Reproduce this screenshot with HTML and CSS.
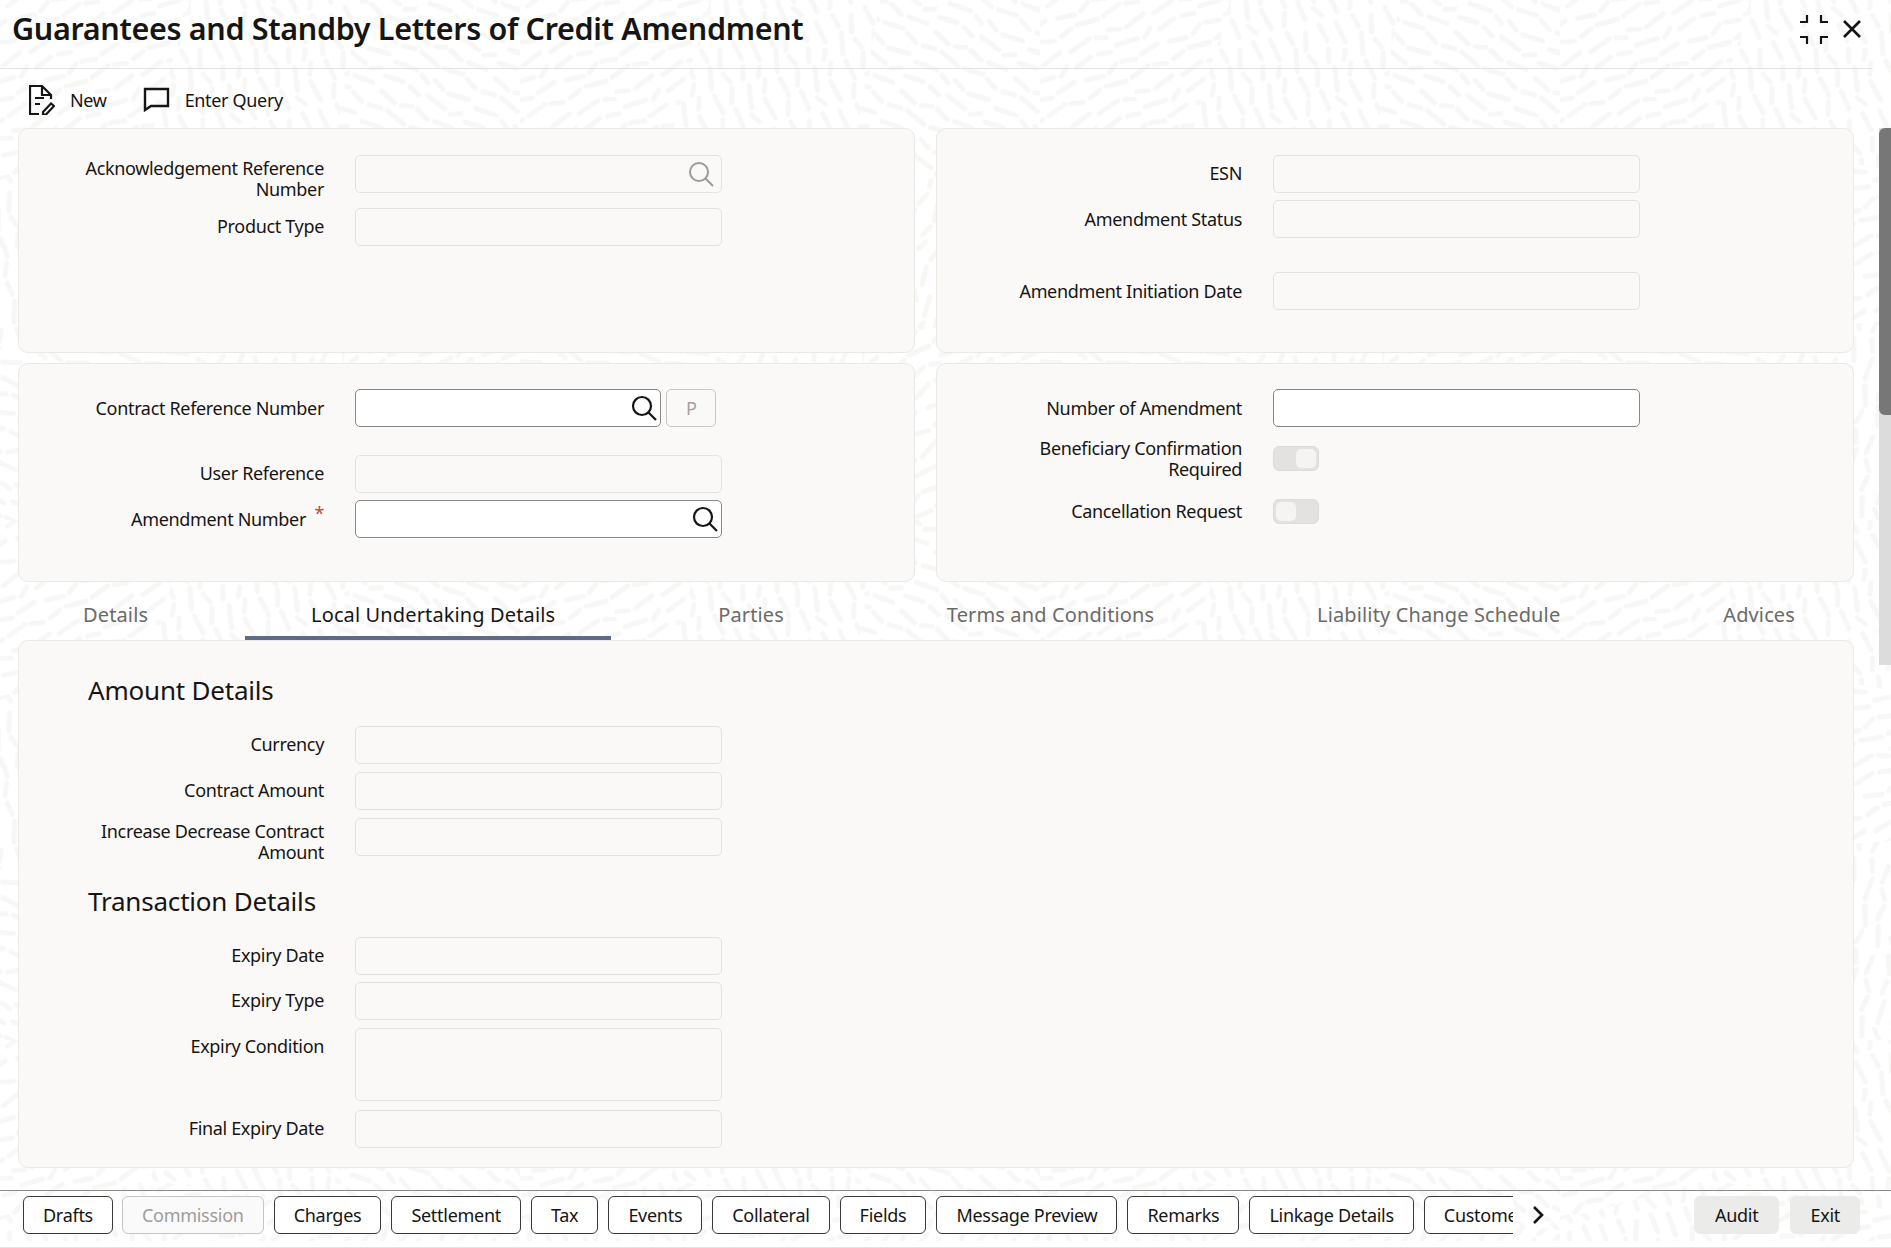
FILE: index.html
```html
<!DOCTYPE html>
<html lang="en">
<head>
  <meta charset="UTF-8">
  <title>Guarantees and Standby Letters of Credit Amendment</title>
  <link rel="stylesheet" href="styles.css">
</head>
<body>
  <!-- Background texture -->
  <svg class="texture" width="1891" height="1241" aria-hidden="true">
    <defs>
      <pattern id="rice" width="92" height="68" patternUnits="userSpaceOnUse">
        <g stroke="#f7f7f6" stroke-width="5" stroke-linecap="round">
          <line x1="4" y1="9" x2="22" y2="5"/>
          <line x1="30" y1="6" x2="42" y2="9"/>
          <line x1="8" y1="24" x2="25" y2="28"/>
          <line x1="32" y1="27" x2="42" y2="22"/>
          <line x1="50" y1="5" x2="72" y2="8"/>
          <line x1="79" y1="10" x2="88" y2="4"/>
          <line x1="48" y1="22" x2="62" y2="26"/>
          <line x1="69" y1="24" x2="88" y2="21"/>
          <line x1="4" y1="42" x2="16" y2="39"/>
          <line x1="23" y1="38" x2="44" y2="42"/>
          <line x1="6" y1="60" x2="28" y2="56"/>
          <line x1="35" y1="58" x2="44" y2="62"/>
          <line x1="51" y1="41" x2="70" y2="37"/>
          <line x1="76" y1="39" x2="88" y2="43"/>
          <line x1="49" y1="56" x2="60" y2="60"/>
          <line x1="67" y1="61" x2="88" y2="56"/>
        </g>
      </pattern>
      <pattern id="r1" href="#rice" patternTransform="rotate(-25)"/>
      <pattern id="r2" href="#rice" patternTransform="rotate(75)"/>
      <pattern id="r3" href="#rice" patternTransform="rotate(30)"/>
      <pattern id="r4" href="#rice" patternTransform="rotate(80)"/>
      <pattern id="r5" href="#rice" patternTransform="rotate(-20)"/>
      <pattern id="r6" href="#rice" patternTransform="rotate(-65)"/>
      <pattern id="r7" href="#rice" patternTransform="rotate(15)"/>
      <pattern id="r8" href="#rice" patternTransform="rotate(100)"/>
      <pattern id="r9" href="#rice" patternTransform="rotate(-35)"/>
      <pattern id="field" width="520" height="520" patternUnits="userSpaceOnUse">
        <polygon points="0,0 190,0 150,140 0,180" fill="url(#r1)"/>
        <polygon points="190,0 360,0 330,170 150,140" fill="url(#r2)"/>
        <polygon points="360,0 520,0 520,190 330,170" fill="url(#r3)"/>
        <polygon points="0,180 150,140 210,330 0,350" fill="url(#r4)"/>
        <polygon points="150,140 330,170 340,320 210,330" fill="url(#r5)"/>
        <polygon points="330,170 520,190 520,340 340,320" fill="url(#r6)"/>
        <polygon points="0,350 210,330 190,520 0,520" fill="url(#r7)"/>
        <polygon points="210,330 340,320 360,520 190,520" fill="url(#r8)"/>
        <polygon points="340,320 520,340 520,520 360,520" fill="url(#r9)"/>
      </pattern>
    </defs>
    <rect width="1891" height="1241" fill="url(#field)"/>
  </svg>

  <div class="page">
    <!-- Title bar -->
    <header class="header">
      <h1 class="title">Guarantees and Standby Letters of Credit Amendment</h1>
      <div class="window-icons">
        <svg width="30" height="30" viewBox="0 0 30 30" fill="none" stroke="#161513" stroke-width="2.200">
          <path d="M1 8H8V1M22 1V8H29M1 23H8V30M29 23H22V30"/>
        </svg>
        <svg width="22" height="22" viewBox="0 0 22 22" fill="none" stroke="#161513" stroke-width="2.600">
          <path d="M3 3L19 19M19 3L3 19"/>
        </svg>
      </div>
    </header>

    <!-- Toolbar -->
    <div class="toolbar">
      <a class="tool tool-new">
        <svg width="26" height="30" viewBox="0 0 26 30" fill="none" stroke="#161513" stroke-width="2.200">
          <path d="M10 29H1V1H13L22 10V14M13 1V10H22"/>
          <path d="M6 13H15M6 19H11"/>
          <path d="M14 27L22 18.500L25 21L17 29.500L14 29.500Z"/>
        </svg>
        New
      </a>
      <a class="tool">
        <svg width="27" height="25" viewBox="0 0 27 25" fill="none" stroke="#161513" stroke-width="2.400">
          <path d="M2 2H25V19H8L2 23Z"/>
        </svg>
        Enter Query
      </a>
    </div>

    <div class="main">
      <div class="content">
        <div class="top-grid">
          <section class="panel panel-first">
            <div class="field">
              <label class="two-line">Acknowledgement Reference Number</label>
              <div class="input disabled">
                <svg class="search search-off" width="26" height="26" viewBox="0 0 26 26" fill="none" stroke="#9b9a98" stroke-width="2">
                  <circle cx="11" cy="11" r="9"/><path d="M17.500 17.500L25 25"/>
                </svg>
              </div>
            </div>
            <div class="field gap-md">
              <label>Product Type</label>
              <div class="input disabled"></div>
            </div>
          </section>

          <section class="panel panel-first">
            <div class="field">
              <label>ESN</label>
              <div class="input disabled"></div>
            </div>
            <div class="field gap-xs low-label">
              <label>Amendment Status</label>
              <div class="input disabled"></div>
            </div>
            <div class="field gap-xl low-label">
              <label>Amendment Initiation Date</label>
              <div class="input disabled"></div>
            </div>
          </section>

          <section class="panel panel-second">
            <div class="field low-label">
              <label>Contract Reference Number</label>
              <div class="input input-short">
                <svg class="search" width="26" height="26" viewBox="0 0 26 26" fill="none" stroke="#161513" stroke-width="2.200">
                  <circle cx="11" cy="11" r="9"/><path d="M17.500 17.500L25 25"/>
                </svg>
              </div>
              <button class="p-btn">P</button>
            </div>
            <div class="field gap-lg">
              <label>User Reference</label>
              <div class="input disabled"></div>
            </div>
            <div class="field gap-xs low-label">
              <label class="required">Amendment Number</label>
              <div class="input">
                <svg class="search" width="26" height="26" viewBox="0 0 26 26" fill="none" stroke="#161513" stroke-width="2.200">
                  <circle cx="11" cy="11" r="9"/><path d="M17.500 17.500L25 25"/>
                </svg>
              </div>
            </div>
          </section>

          <section class="panel panel-second">
            <div class="field low-label">
              <label>Number of Amendment</label>
              <div class="input"></div>
            </div>
            <div class="field field-toggle field-tall">
              <label class="two-line">Beneficiary Confirmation Required</label>
              <span class="toggle on"></span>
            </div>
            <div class="field field-toggle gap-toggle">
              <label>Cancellation Request</label>
              <span class="toggle"></span>
            </div>
          </section>
        </div>

        <!-- Tabs -->
        <nav class="tabs">
          <a>Details</a>
          <a class="active">Local Undertaking Details</a>
          <a>Parties</a>
          <a>Terms and Conditions</a>
          <a>Liability Change Schedule</a>
          <a>Advices</a>
        </nav>

        <section class="panel panel-tab">
          <h2>Amount Details</h2>
          <div class="field">
            <label>Currency</label>
            <div class="input disabled"></div>
          </div>
          <div class="field">
            <label>Contract Amount</label>
            <div class="input disabled"></div>
          </div>
          <div class="field">
            <label class="two-line">Increase Decrease Contract Amount</label>
            <div class="input disabled"></div>
          </div>
          <h2 class="h2-second">Transaction Details</h2>
          <div class="field">
            <label>Expiry Date</label>
            <div class="input disabled"></div>
          </div>
          <div class="field gap-xs">
            <label>Expiry Type</label>
            <div class="input disabled"></div>
          </div>
          <div class="field field-area">
            <label>Expiry Condition</label>
            <div class="input disabled textarea"></div>
          </div>
          <div class="field">
            <label>Final Expiry Date</label>
            <div class="input disabled"></div>
          </div>
        </section>
      </div>

      <div class="scrollbar"><div class="thumb"></div></div>
    </div>

    <!-- Footer buttons -->
    <footer class="footer">
      <div class="actions">
        <button>Drafts</button>
        <button class="off">Commission</button>
        <button>Charges</button>
        <button>Settlement</button>
        <button>Tax</button>
        <button>Events</button>
        <button>Collateral</button>
        <button>Fields</button>
        <button>Message Preview</button>
        <button>Remarks</button>
        <button>Linkage Details</button>
        <button>Customer</button>
      </div>
      <svg class="chevron" width="14" height="20" viewBox="0 0 14 20" fill="none" stroke="#161513" stroke-width="2.600">
        <path d="M3 2L11 10L3 18"/>
      </svg>
      <div class="exit-group">
        <button class="grey audit">Audit</button>
        <button class="grey">Exit</button>
      </div>
    </footer>
  </div>
</body>
</html>
```

FILE: styles.css
```css
body {
  margin: 0;
  width: 1891px;
  height: 1248px;
  overflow: hidden;
  position: relative;
  background-color: #ffffff;
  color: #161513;
  font-family: "Noto Sans", Arial, sans-serif;
  font-size: 18px;
  letter-spacing: -0.33px;
}

.texture {
  position: absolute;
  top: 0;
  left: 0;
}

.page {
  position: relative;
  display: flex;
  flex-direction: column;
  height: 1248px;
}

/* Title bar */
.header {
  display: flex;
  justify-content: space-between;
  align-items: center;
  height: 69px;
  margin-right: 19px;
  padding-left: 12px;
  border-bottom: 1px solid #e4e3e1;
  box-sizing: border-box;
}

.title {
  margin: 0 0 12px;
  font-size: 30.500px;
  font-weight: 600;
  letter-spacing: -0.33px;
  line-height: 40px;
}

.window-icons {
  display: flex;
  align-items: center;
  gap: 12px;
  margin-bottom: 10px;
  padding-right: 9px;
}

/* Toolbar */
.toolbar {
  display: flex;
  align-items: center;
  gap: 36px;
  height: 59px;
  padding: 2px 0 0 29px;
  box-sizing: border-box;
}

.tool {
  display: flex;
  align-items: center;
  gap: 15px;
}

/* Main */
.main {
  display: flex;
  justify-content: space-between;
  height: 1062px;
  overflow: hidden;
}

.content {
  width: 1836px;
  margin-left: 18px;
}

.top-grid {
  display: grid;
  grid-template-columns: 897px 918px;
  column-gap: 21px;
  row-gap: 10px;
}

.panel {
  background-color: #fbf9f8;
  border: 1px solid #ebe9e6;
  border-radius: 10px;
  box-sizing: border-box;
}

.panel-first {
  height: 225px;
  padding-top: 26px;
}

.panel-second {
  height: 219px;
  padding-top: 25px;
}

.panel-tab {
  width: 1836px;
  height: 528px;
  padding-top: 31px;
}

h2 {
  margin: 0 0 18px 69px;
  font-size: 26px;
  font-weight: 400;
  letter-spacing: -0.2px;
  line-height: 36px;
}

.h2-second {
  margin-top: 27px;
}

/* Form rows */
.field {
  display: flex;
  gap: 31px;
  height: 38px;
  margin-top: 8px;
  padding-left: 55px;
}

.field:first-child {
  margin-top: 0;
}

.gap-xs {
  margin-top: 7px;
}

.gap-md {
  margin-top: 15px;
}

.gap-lg {
  margin-top: 28px;
}

.gap-xl {
  margin-top: 34px;
}

.gap-toggle {
  margin-top: 13px;
}

.field-tall {
  height: 42px;
  margin-top: 10px;
}

.field-area {
  height: 74px;
}

.field label {
  width: 250px;
  padding-top: 8px;
  line-height: 21px;
  text-align: right;
}

.field label.two-line {
  padding-top: 3px;
}

.low-label label {
  padding-top: 9px;
}

.field.low-label label {
  padding-top: 9px;
}

.field-toggle label {
  padding-top: 0;
}

.field-toggle {
  align-items: center;
}

.field.field-toggle label {
  padding-top: 0;
}

.field.field-toggle label.two-line {
  padding-top: 2px;
}

.required {
  position: relative;
  box-sizing: border-box;
  padding-right: 18px;
}

.required::after {
  content: "*";
  position: absolute;
  top: 3px;
  right: 0;
  color: #c74634;
}

.input {
  position: relative;
  width: 367px;
  height: 38px;
  background-color: #ffffff;
  border: 1px solid #8a8886;
  border-radius: 5px;
  box-sizing: border-box;
}

.input.disabled {
  background-color: #fbf9f8;
  border-color: #e4e2df;
}

.input-short {
  width: 306px;
}

.textarea {
  height: 73px;
}

.search {
  position: absolute;
  top: 5px;
  right: 3px;
}

.search-off {
  right: 7px;
}

.p-btn {
  width: 50px;
  height: 38px;
  margin-left: -26px;
  background-color: #fbf9f8;
  border: 1px solid #c8c7c5;
  border-radius: 5px;
  color: #a3a2a0;
  font: inherit;
}

.toggle {
  position: relative;
  width: 46px;
  height: 25px;
  background-color: #e3e2e0;
  border: 1px solid #dddcda;
  border-radius: 6px;
  box-sizing: border-box;
}

.toggle::after {
  content: "";
  position: absolute;
  top: 2px;
  left: 2px;
  width: 20px;
  height: 19px;
  background-color: #f6f4f2;
  border-radius: 5px;
}

.toggle.on::after {
  left: 22px;
}

/* Tabs */
.tabs {
  display: flex;
  justify-content: space-between;
  width: 1834px;
  height: 58px;
  margin-left: -1px;
  font-size: 20px;
  letter-spacing: 0.13px;
  color: #6b6a68;
}

.tabs a {
  padding: 19px 56px 0 66px;
  line-height: 28px;
  box-sizing: border-box;
}

.tabs a.active {
  color: #161513;
  border-bottom: 4px solid #5f6a86;
}

/* Scrollbar */
.scrollbar {
  width: 12px;
  height: 537px;
  background-color: #dcdcdc;
}

.thumb {
  height: 287px;
  background-color: #777777;
  border-radius: 6px 0 0 6px;
}

/* Footer */
.footer {
  display: flex;
  align-items: flex-start;
  height: 51px;
  padding: 5px 31px 0 23px;
  border-top: 1px solid #8a8a8a;
  box-sizing: border-box;
}

.actions {
  display: flex;
  gap: 10px;
  width: 1490px;
  overflow: hidden;
}

button {
  flex-shrink: 0;
  height: 38px;
  padding: 0 19px;
  background-color: #ffffff;
  border: 1px solid #3a3937;
  border-radius: 6px;
  color: #161513;
  font: inherit;
  letter-spacing: -0.28px;
}

.actions button:first-child {
  margin-right: -1px;
}

button.off {
  background-color: #fafafa;
  border-color: #c6c5c3;
  color: #9e9d9b;
}

.chevron {
  margin: 9px 0 0 18px;
}

.exit-group {
  display: flex;
  gap: 11px;
  margin-left: auto;
}

button.grey {
  background-color: #ebebea;
  border-color: #ebebea;
}

button.audit {
  padding: 0 20px;
}

.page::after {
  content: "";
  position: absolute;
  left: 0;
  right: 0;
  bottom: 0;
  height: 1px;
  background-color: #e4e4e4;
}
```
